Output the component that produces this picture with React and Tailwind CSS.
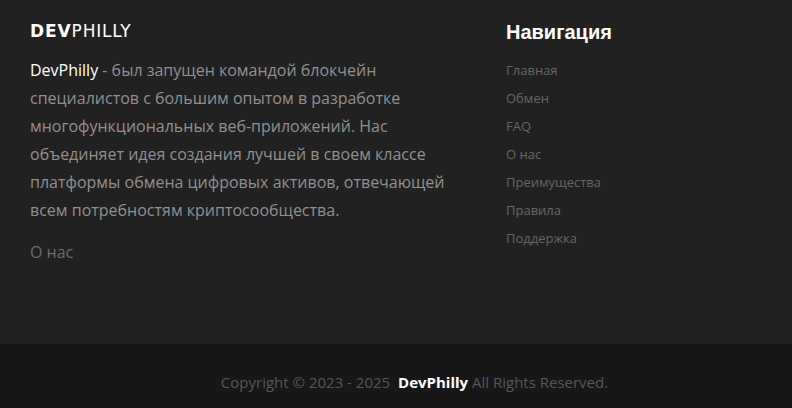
const navLinks = ["Главная", "Обмен", "FAQ", "О нас", "Преимущества", "Правила", "Поддержка"];

export default function App() {
  return (
    <div className="w-[792px] h-[408px] flex flex-col overflow-hidden bg-[#212121] font-['Open_Sans',sans-serif]">
      <div className="h-[344px] flex pl-[30px] pt-[21px]">
        <div className="w-[476px] pr-[30px]">
          <div className="h-[20px] flex items-center text-[17px] leading-[20px] text-white font-['DejaVu_Sans',sans-serif]">
            <span className="font-bold tracking-[0.9px]">DEV</span>
            <span className="font-normal tracking-[0.8px]">PHILLY</span>
          </div>
          <p className="mt-[1px] pt-[14px] text-[16px] leading-[28px] text-[#909090]">
            <span className="text-white">DevPhilly</span> - был запущен командой блокчейн специалистов с большим опытом в разработке многофункциональных веб-приложений. Нас объединяет идея создания лучшей в своем классе платформы обмена цифровых активов, отвечающей всем потребностям криптосообщества.
          </p>
          <a className="block mt-[14px] text-[16px] leading-[28px] text-[#6c6c6c]">О нас</a>
        </div>
        <div className="flex flex-col -mt-[1px]">
          <h3 className="text-[20px] leading-[24px] font-bold text-white font-['Liberation_Sans',sans-serif]">Навигация</h3>
          <ul className="mt-[12px] flex flex-col">
            {navLinks.map((link) => (
              <li key={link} className="h-[28px] text-[13px] leading-[28px] text-[#666666]">{link}</li>
            ))}
          </ul>
        </div>
      </div>
      <div className="h-[64px] flex items-center justify-center pt-[12px] pl-[37px] bg-[#171717] text-[15px] text-[#565656]">
        <span>Copyright © 2023 - 2025 <b className="pl-[4px] font-bold text-white">DevPhilly</b> All Rights Reserved.</span>
      </div>
    </div>
  );
}
